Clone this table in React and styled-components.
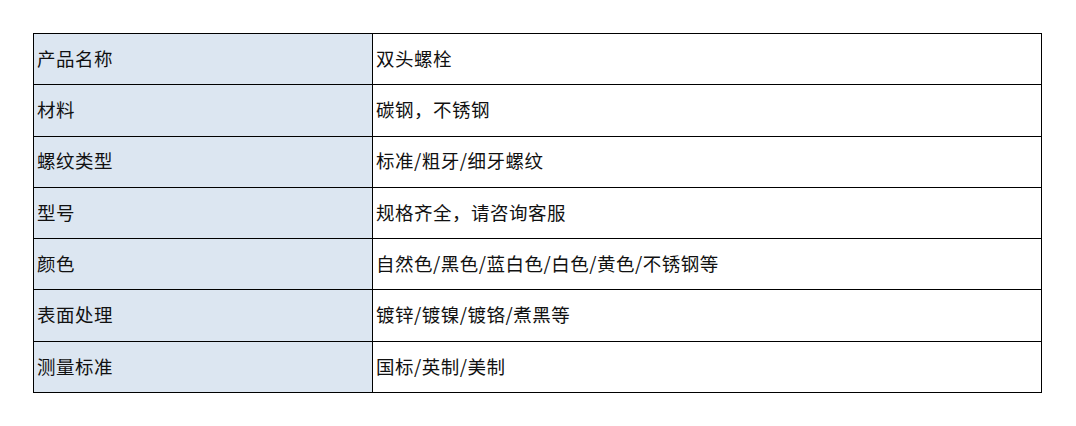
import React from "react";
import styled, { createGlobalStyle } from "styled-components";

const GlobalStyle = createGlobalStyle`
  body {
    margin: 0;
    background: #ffffff;
    font-family: "Noto Sans CJK SC", "Liberation Sans", sans-serif;
  }
`;

const rows = [
  ["产品名称", "双头螺栓"],
  ["材料", "碳钢，不锈钢"],
  ["螺纹类型", "标准/粗牙/细牙螺纹"],
  ["型号", "规格齐全，请咨询客服"],
  ["颜色", "自然色/黑色/蓝白色/白色/黄色/不锈钢等"],
  ["表面处理", "镀锌/镀镍/镀铬/煮黑等"],
  ["测量标准", "国标/英制/美制"],
];

const Page = styled.div`
  padding: 33px 0 0 33px;
`;

const Table = styled.table`
  border-collapse: collapse;
  width: 1009px;
  table-layout: fixed;
`;

const Row = styled.tr`
  height: 51.3px;
`;

const Cell = styled.td`
  border: 1px solid #000000;
  padding: 0 0 2px 3px;
  font-size: 18.5px;
  letter-spacing: 0.5px;
  line-height: 1;
  color: #111111;
  vertical-align: middle;
  background: ${(p) => (p.$label ? "#dce6f1" : "#ffffff")};
  width: ${(p) => (p.$label ? "335px" : "auto")};
  white-space: nowrap;
`;

export default function App() {
  return (
    <>
      <GlobalStyle />
      <Page>
        <Table>
          <tbody>
            {rows.map(([k, v]) => (
              <Row key={k}>
                <Cell $label>{k}</Cell>
                <Cell>{v}</Cell>
              </Row>
            ))}
          </tbody>
        </Table>
      </Page>
    </>
  );
}
